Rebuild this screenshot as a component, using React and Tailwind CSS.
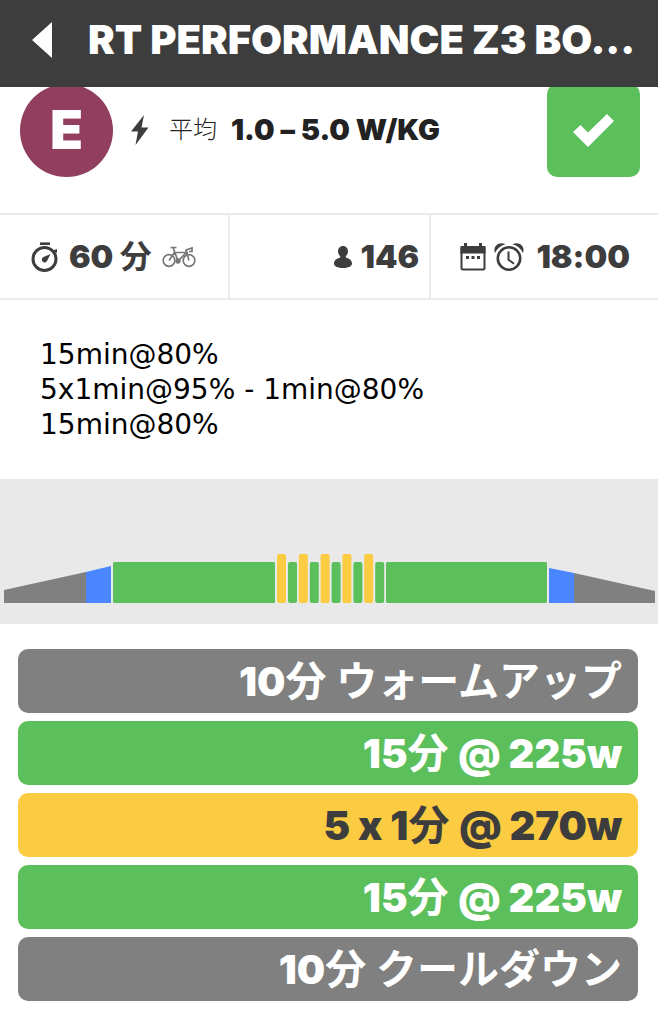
const STEPS = [
  { id: 'warmup', time: '10', name: 'ウォームアップ', className: 'bg-[#808080] text-white' },
  { id: 'steady-1', time: '15', power: '@ 225w', className: 'bg-[#5bc05c] text-white' },
  { id: 'intervals', time: '5 x 1', power: '@ 270w', className: 'bg-[#fbcb41] text-[#3d3d3d]' },
  { id: 'steady-2', time: '15', power: '@ 225w', className: 'bg-[#5bc05c] text-white' },
  { id: 'cooldown', time: '10', name: 'クールダウン', className: 'bg-[#808080] text-white' },
];

const DESCRIPTION = ['15min@80%', '5x1min@95% - 1min@80%', '15min@80%'];

const GREEN = '#5bc05c';
const YELLOW = '#fbcb41';
const BLUE = '#4a86ff';
const GRAY = '#808080';

function BackIcon() {
  return (
    <svg className="w-5 h-9" viewBox="0 0 20 36" fill="currentColor" aria-hidden="true">
      <path d="M20 0v36L0 18z" />
    </svg>
  );
}

function BoltIcon() {
  return (
    <svg className="w-[18px] h-[30px] shrink-0" viewBox="0 0 18 30" fill="currentColor" aria-hidden="true">
      <path d="M13 0L0 16.5h7L4.5 30 17.5 12.5h-7z" />
    </svg>
  );
}

function CheckIcon() {
  return (
    <svg className="w-[41px] h-[33px]" viewBox="0 0 41 33" fill="currentColor" aria-hidden="true">
      <path d="M34 0l7 7-26 26L0 18l7.5-7 7.5 7.5z" />
    </svg>
  );
}

function StopwatchIcon() {
  return (
    <svg className="w-7 h-[30px] shrink-0" viewBox="0 0 28 30" aria-hidden="true">
      <path d="M9 1.7h10" stroke="currentColor" strokeWidth="2.6" fill="none" />
      <circle cx="13.5" cy="17" r="11.5" stroke="currentColor" strokeWidth="3" fill="none" />
      <path d="M22 8.5l4-1.5v4z" fill="currentColor" />
      <path d="M19.5 12l-3.6 7.3a2.8 2.8 0 1 1-3.8-4z" fill="currentColor" />
    </svg>
  );
}

function BikeIcon() {
  return (
    <svg
      className="w-[34px] h-[22px] shrink-0 text-[#777]"
      viewBox="0 0 34 22"
      fill="none"
      stroke="currentColor"
      strokeWidth="1.7"
      aria-hidden="true"
    >
      <circle cx="7" cy="14.5" r="5.8" />
      <circle cx="27" cy="14.5" r="5.8" />
      <path d="M12.5 6.5h12L16 15 11 1.5M8.5 1.5h6M7 14.5l5.5-8" />
      <path d="M27 14.5L24 4l6-2v3.5h-3" />
      <circle cx="16" cy="15" r="1.8" fill="currentColor" />
    </svg>
  );
}

function PersonIcon() {
  return (
    <svg className="w-[18px] h-[22px] shrink-0" viewBox="0 0 18 22" fill="currentColor" aria-hidden="true">
      <path d="M9 0c3 0 5 2.3 5 5.2 0 2.2-1 3.8-2.2 5v1.2C15.5 12.3 18 14.5 18 17.5c0 3-4 4.5-9 4.5s-9-1.5-9-4.5c0-3 2.5-5.2 6.2-6.1v-1.2C5 9 4 7.4 4 5.2 4 2.3 6 0 9 0z" />
    </svg>
  );
}

function CalendarIcon() {
  return (
    <svg className="w-[26px] h-7 shrink-0" viewBox="0 0 26 28" fill="none" aria-hidden="true">
      <rect x="1.5" y="4" width="23" height="22.5" rx="1.5" stroke="currentColor" strokeWidth="2" />
      <path d="M.5 3h25v7.5H.5zM4 0h3v4H4zM19 0h3v4h-3z" fill="currentColor" />
      <path d="M6 13h3v3H6zM11.5 13h3v3h-3zM17 13h3v3h-3z" fill="currentColor" />
    </svg>
  );
}

function AlarmIcon() {
  return (
    <svg className="w-[30px] h-7 shrink-0" viewBox="0 0 30 28" fill="none" aria-hidden="true">
      <circle cx="15" cy="15.5" r="11.2" stroke="currentColor" strokeWidth="2.6" />
      <path d="M14.5 8.5v8.2l5.5 4" stroke="currentColor" strokeWidth="2" />
      <path d="M1 10C-1.5 3 5-2 11.5 1.2 6.500 2.500 3 5.500 1 10zM29 10C31.500 3 25-2 18.500 1.200 23.500 2.500 27 5.500 29 10z" fill="currentColor" />
    </svg>
  );
}

function WorkoutChart() {
  const intervals = [0, 1, 2, 3, 4];
  return (
    <svg
      className="block w-full h-[145px]"
      viewBox="0 0 658 145"
      preserveAspectRatio="none"
      role="img"
      aria-label="Workout profile"
    >
      <path d="M4 111L86 93v31H4z" fill={GRAY} />
      <path d="M86 93l25-6v37H86z" fill={BLUE} />
      <rect x="113" y="83" width="162" height="41" rx="1.5" fill={GREEN} />
      {intervals.map((i) => (
        <g key={i}>
          <rect x={277 + i * 21.8} y="75" width="9" height="49" rx="2" fill={YELLOW} />
          <rect x={288 + i * 21.8} y="83" width="9" height="41" rx="2" fill={GREEN} />
        </g>
      ))}
      <rect x="386" y="83" width="161" height="41" rx="1.5" fill={GREEN} />
      <path d="M549 89l25 5v30h-25z" fill={BLUE} />
      <path d="M574 94l81 18v12h-81z" fill={GRAY} />
    </svg>
  );
}

export default function App() {
  return (
    <div className="min-h-screen bg-white text-[#3d3d3d] font-['Inter','Noto_Sans_CJK_JP',sans-serif] [font-feature-settings:'calt'_0]">
      <header className="relative z-10 flex items-center h-[87px] pl-8 pr-4 pb-2 gap-9 bg-[#3d3d3d] text-white">
        <button type="button" aria-label="Back" className="shrink-0">
          <BackIcon />
        </button>
        <h1 className="flex-1 text-[40px] leading-none font-black whitespace-nowrap">
          RT PERFORMANCE Z3 BO...
        </h1>
      </header>

      <section className="flex items-center -mt-1 h-[130px] pl-5 pr-[18px] pb-9">
        <div className="flex items-center justify-center shrink-0 size-[93px] rounded-full bg-[#923e5e] text-white text-[54px] leading-none font-black">
          E
        </div>
        <div className="flex flex-1 items-center ml-[18px]">
          <BoltIcon />
          <span className="ml-5 text-2xl font-light text-[#222]">平均</span>
          <span className="ml-3.5 text-[29px] font-black text-[#222] whitespace-nowrap">
            1.0 – 5.0 W/KG
          </span>
        </div>
        <button
          type="button"
          aria-label="Joined"
          className="flex items-center justify-center shrink-0 size-[93px] rounded-[10px] bg-[#5bc05c] text-white"
        >
          <CheckIcon />
        </button>
      </section>

      <section className="grid grid-cols-[230fr_201fr_227fr] h-[87px] border-y-2 border-[#ebebeb] text-[32px] leading-none font-black divide-x-2 divide-[#ebebeb]">
        <div className="flex items-center pl-[31px] gap-2.5 whitespace-nowrap">
          <StopwatchIcon />
          <span>
            60 <span className="font-bold">分</span>
          </span>
          <BikeIcon />
        </div>
        <div className="flex items-center justify-end pr-2.5 gap-2">
          <PersonIcon />
          <span>146</span>
        </div>
        <div className="flex items-center justify-end pr-7 gap-2">
          <CalendarIcon />
          <AlarmIcon />
          <span className="ml-1">18:00</span>
        </div>
      </section>

      <section className="px-10 pt-[37px] pb-[37px] text-[28px] leading-[35px] text-black font-['DejaVu_Sans',sans-serif]">
        {DESCRIPTION.map((line, i) => (
          <p key={i}>{line}</p>
        ))}
      </section>

      <section className="bg-[#e9e9e9]">
        <WorkoutChart />
      </section>

      <ul className="flex flex-col gap-2 pt-[25px] pb-5 pl-[18px] pr-5">
        {STEPS.map((step) => (
          <li
            key={step.id}
            className={`flex items-center justify-end h-16 rounded-[10px] pr-4 text-[40px] leading-none font-black whitespace-pre ${step.className}`}
          >
            <span>
              {step.time}
              <span className="text-[41px] font-bold">分 {step.name}</span>
              {step.power}
            </span>
          </li>
        ))}
      </ul>
    </div>
  );
}
